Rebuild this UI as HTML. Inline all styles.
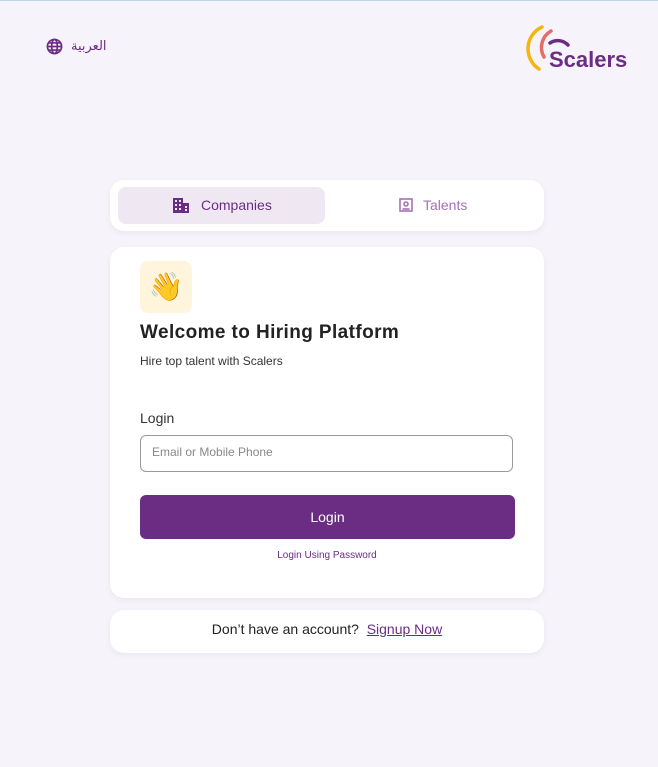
<!DOCTYPE html>
<html><head><meta charset="utf-8"><style>
*{box-sizing:border-box;margin:0;padding:0}
body{width:658px;height:767px;background:#f6f4fa;font-family:"Liberation Sans","Noto Sans CJK SC",sans-serif;position:relative;overflow:hidden;border-top:1px solid #bcd6ea}
.abs{position:absolute}
.card{position:absolute;background:#fff;border-radius:14px;box-shadow:0 2px 6px rgba(80,60,120,.08)}
</style></head><body>
<div class="abs" style="left:46px;top:37px;display:flex;align-items:center;gap:8px;color:#6b2d83">
<svg width="17" height="17" viewBox="0 0 24 24" fill="none" stroke="#6b2d83" stroke-width="2.4"><circle cx="12" cy="12" r="10"/><ellipse cx="12" cy="12" rx="4" ry="10"/><path d="M2 12h20M4 7h16M4 17h16"/></svg>
<span style="font-family:'DejaVu Sans',sans-serif;font-size:13px">العربية</span></div>
<svg class="abs" style="left:526px;top:22px" width="50" height="50" viewBox="0 0 50 50" fill="none" stroke-linecap="round">
<path d="M16 4 A24 24 0 0 0 13 46" stroke="#f5b50f" stroke-width="3.5"/>
<path d="M25 8 A19 19 0 0 0 18 34" stroke="#e36d67" stroke-width="3.5"/>
<path d="M24 20 A14 14 0 0 1 42 22" stroke="#6b2d83" stroke-width="3.5"/>
</svg>
<div class="abs" style="left:549px;top:46px;font-size:22px;font-weight:bold;color:#6b2d83">Scalers</div>

<div class="card" style="left:110px;top:179px;width:434px;height:51px">
<div class="abs" style="left:8px;top:7px;width:207px;height:37px;background:#efe8f2;border-radius:8px"></div>
<svg class="abs" style="left:63px;top:18px" width="16" height="15" viewBox="0 0 16 15"><rect x="0" y="0" width="10" height="15" fill="#6b2d83"/><rect x="10" y="5" width="6" height="10" fill="#6b2d83"/><g fill="#efe8f2"><rect x="2" y="2" width="2" height="2"/><rect x="6" y="2" width="2" height="2"/><rect x="2" y="6" width="2" height="2"/><rect x="6" y="6" width="2" height="2"/><rect x="2" y="10" width="2" height="2"/><rect x="6" y="10" width="2" height="2"/><rect x="12" y="8" width="2" height="2"/><rect x="12" y="11" width="2" height="2"/></g></svg>
<div class="abs" style="left:91px;top:17px;font-size:14px;color:#6b2d83">Companies</div>
<svg class="abs" style="left:289px;top:18px" width="14" height="14" viewBox="0 0 14 14" fill="none" stroke="#a472b5" stroke-width="1.6"><rect x="1" y="1" width="12" height="12"/><circle cx="7" cy="6" r="2"/><path d="M3.5 11h7"/></svg>
<div class="abs" style="left:313px;top:17px;font-size:14px;color:#a472b5">Talents</div>
</div>

<div class="card" style="left:110px;top:246px;width:434px;height:351px">
<div class="abs" style="left:30px;top:14px;width:52px;height:52px;background:#fff5dd;border-radius:8px;font-size:28px;text-align:center;line-height:52px">👋</div>
<div class="abs" style="left:30px;top:75px;font-size:19px;font-weight:bold;color:#222;letter-spacing:0.4px">Welcome to Hiring Platform</div>
<div class="abs" style="left:30px;top:107px;font-size:12px;color:#333">Hire top talent with Scalers</div>
<div class="abs" style="left:30px;top:163px;font-size:14px;color:#333">Login</div>
<div class="abs" style="left:30px;top:188px;width:373px;height:37px;border:1px solid #999;border-radius:6px;padding:9px 11px;font-size:12px;color:#888">Email or Mobile Phone</div>
<div class="abs" style="left:30px;top:248px;width:375px;height:44px;background:#6b2d83;border-radius:6px;color:#fff;font-size:14px;text-align:center;line-height:44px">Login</div>
<div class="abs" style="left:0;width:434px;top:303px;text-align:center;font-size:10px;color:#6b2d83">Login Using Password</div>
</div>

<div class="card" style="left:110px;top:609px;width:434px;height:43px;text-align:center;font-size:14px;line-height:38px;color:#222">Don’t have an account?&nbsp; <span style="color:#6b2d83;text-decoration:underline">Signup Now</span></div>
</body></html>
